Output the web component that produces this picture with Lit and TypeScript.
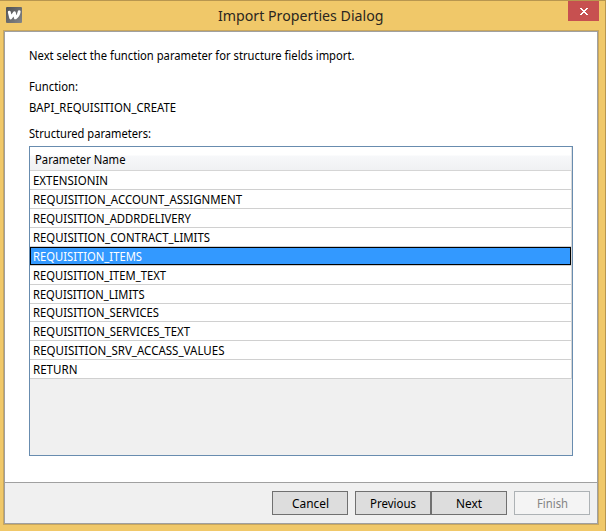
import { LitElement, html, css, svg } from "lit";
import { customElement, property } from "lit/decorators.js";

/** One line of text condensed horizontally to fill a given width. */
@customElement("fit-text")
class FitText extends LitElement {
  @property({ type: Number }) width = 0;
  @property() text = "";

  static styles = css`
    :host { display: block; white-space: nowrap; }
    .line { display: inline-block; transform-origin: 0 0; }
  `;

  render() {
    return html`<span class="line">${this.text}</span>`;
  }

  firstUpdated() {
    const line = this.renderRoot.querySelector(".line") as HTMLElement;
    const natural = line.getBoundingClientRect().width;
    line.style.transform = `scaleX(${this.width / natural})`;
    line.style.marginRight = `${this.width - natural}px`;
  }
}

@customElement("dialog-button")
class DialogButton extends LitElement {
  @property() label = "";
  @property({ type: Number }) width = 0;
  @property({ type: Boolean }) disabled = false;

  static styles = css`
    :host { display: block; }
    .button {
      box-sizing: border-box; display: flex; justify-content: center;
      width: 76px; height: 24px; margin: 0; padding: 3px 0 0;
      border: 1px solid #707070; border-radius: 0;
      background: #ddd; color: #000;
      font: inherit; line-height: 18px;
    }
    .button:disabled { background: #f4f4f4; border-color: #adb2b5; color: #838383; }
  `;

  render() {
    return html`<button class="button" ?disabled=${this.disabled}>
      <fit-text text=${this.label} width=${this.width}></fit-text>
    </button>`;
  }
}

interface Row { name: string; width: number; selected?: boolean; short?: boolean }

const ROWS: Row[] = [
  { name: "EXTENSIONIN", width: 75 },
  { name: "REQUISITION_ACCOUNT_ASSIGNMENT", width: 209 },
  { name: "REQUISITION_ADDRDELIVERY", width: 158 },
  { name: "REQUISITION_CONTRACT_LIMITS", width: 177 },
  { name: "REQUISITION_ITEMS", width: 109, selected: true },
  { name: "REQUISITION_ITEM_TEXT", width: 133 },
  { name: "REQUISITION_LIMITS", width: 111.5 },
  { name: "REQUISITION_SERVICES", width: 126, short: true },
  { name: "REQUISITION_SERVICES_TEXT", width: 157 },
  { name: "REQUISITION_SRV_ACCASS_VALUES", width: 191.5 },
  { name: "RETURN", width: 44.5 },
];

const logo = svg`
  <defs><linearGradient id="g" x1="0" y1="0" x2="1" y2="1">
    <stop offset="0" stop-color="#505153"/><stop offset="1" stop-color="#858688"/>
  </linearGradient></defs>
  <rect width="16" height="16" rx="1" fill="url(#g)"/>
  <path d="M3.3 5.2 L4.7 11 L8.4 5.8 L9.4 10.9 C11.4 9.8 12.8 7.4 13.2 4.6"
    fill="none" stroke="#fff" stroke-width="2.9" stroke-linecap="round" stroke-linejoin="round"/>`;

@customElement("app-root")
class AppRoot extends LitElement {
  static styles = css`
    :host {
      display: block; width: 606px; height: 531px; overflow: hidden;
      font: 12px/18px "Noto Sans", "Open Sans", sans-serif; color: #000;
    }
    .window {
      box-sizing: border-box; width: 606px; height: 531px;
      display: flex; flex-direction: column; background: #f0c869;
      border-top: 1px solid #b8964f; border-right: 1px solid #b8964f;
    }
    .titlebar { display: flex; height: 29px; padding: 0 6px; }
    .logo { width: 16px; height: 16px; margin-top: 6px; }
    .title {
      flex: 1; padding: 3px 0 0 195.5px; font-size: 15.3px; line-height: 22px; color: #2b2620;
    }
    .close {
      width: 31px; height: 20px; background: #c75050; display: block;
    }
    .frame {
      box-sizing: border-box; width: 596px; height: 495px; margin-left: 3px;
      border: 1px solid #c9a75c;
    }
    .client {
      box-sizing: border-box; height: 493px; border: 1px solid #a0a0a0;
      background: #fff; display: flex; flex-direction: column;
    }
    .content { height: 450px; box-sizing: border-box; padding: 15px 24px 0; }
    .intro { margin-bottom: 13px; }
    .caption { margin-bottom: 3px; }
    .value { margin-bottom: 8px; }
    .list-label { margin-bottom: 3px; }
    .grid {
      box-sizing: border-box; width: 544px; height: 310px;
      border: 1px solid #688caf; background: #f0f0f0;
    }
    .head {
      box-sizing: border-box; height: 24px; padding: 4px 0 0 5px;
      border-right: 1px solid #dfe1e4; border-bottom: 1px solid #d5d5d5;
      background: linear-gradient(#fff 0 8px, #f7f8fa 9px, #f0f1f3 23px);
    }
    .row {
      box-sizing: border-box; height: 19px; padding: 1px 0 0 3px;
      border-right: 1px solid #d5d5d5; border-bottom: 1px solid #d0d0d0;
      background: #fff; line-height: 17px;
    }
    .row.short { height: 18px; padding-top: 0; }
    .row.selected {
      background: #3399ff; color: #fff;
      background-clip: padding-box;
      box-shadow: inset 0 0 0 1px #000;
    }
    .footer {
      box-sizing: border-box; flex: 1; display: flex; justify-content: flex-end;
      padding: 8px 7px 0 0; background: #f0f0f0; border-top: 1px solid #a0a0a0;
    }
    .gap { margin-right: 7px; }
  `;

  render() {
    return html`
      <div class="window">
        <div class="titlebar">
          <svg class="logo" viewBox="0 0 16 16">${logo}</svg>
          <fit-text class="title" text="Import Properties Dialog" width="165.5"></fit-text>
          <svg class="close" viewBox="0 0 31 20" shape-rendering="crispEdges">
            <path fill="#fff" d="M12 7h2v1h1v1h2v-1h1v-1h2v1h-1v1h-1v1h-1v1h1v1h1v1h1v1h-2v-1h-1v-1h-2v1h-1v1h-2v-1h1v-1h1v-1h1v-1h-1v-1h-1v-1h-1z"/>
          </svg>
        </div>
        <div class="frame">
          <div class="client">
            <div class="content">
              <fit-text class="intro" text="Next select the function parameter for structure fields import." width="325.5"></fit-text>
              <fit-text class="caption" text="Function:" width="49"></fit-text>
              <fit-text class="value" text="BAPI_REQUISITION_CREATE" width="147"></fit-text>
              <fit-text class="list-label" text="Structured parameters:" width="122"></fit-text>
              <div class="grid">
                <div class="head"><fit-text text="Parameter Name" width="90.5"></fit-text></div>
                ${ROWS.map((r) => html`
                  <div class="row ${r.selected ? "selected" : ""} ${r.short ? "short" : ""}">
                    <fit-text text=${r.name} width=${r.width}></fit-text>
                  </div>`)}
              </div>
            </div>
            <div class="footer">
              <dialog-button class="gap" label="Cancel" width="37"></dialog-button>
              <dialog-button label="Previous" width="46"></dialog-button>
              <dialog-button class="gap" label="Next" width="26"></dialog-button>
              <dialog-button label="Finish" width="31" disabled></dialog-button>
            </div>
          </div>
        </div>
      </div>`;
  }
}
